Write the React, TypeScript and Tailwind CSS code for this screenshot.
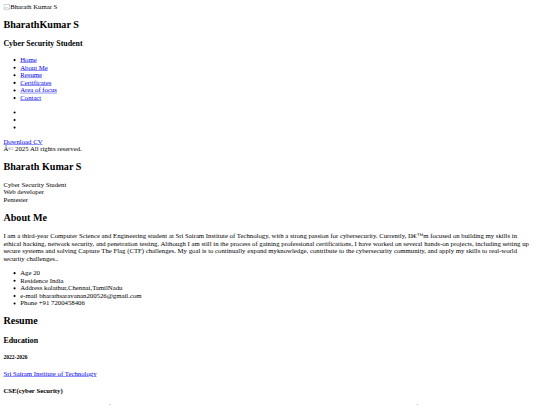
import { ReactNode } from 'react'

function A({ children }: { children: ReactNode }) {
  return <a href="#" className="text-[#0000ee] underline">{children}</a>
}

function H2({ children }: { children: ReactNode }) {
  return <h2 className="text-[24px] font-bold my-[19.92px]">{children}</h2>
}

function H3({ children }: { children: ReactNode }) {
  return <h3 className="text-[18.72px] font-bold my-[18.72px]">{children}</h3>
}

function Ul({ children }: { children: ReactNode }) {
  return <ul className="list-disc pl-10 my-4">{children}</ul>
}

export default function App() {
  const nav = ['Home', 'About Me', 'Resume', 'Certificates', 'Area of focus', 'Contact']
  const info = [
    'Age 20',
    'Residence India',
    'Address kolathur,Chennai,TamilNadu',
    'e-mail bharathsaravanan200526@gmail.com',
    'Phone +91 7200458406',
  ]

  return (
    <div className="w-[540px] h-[405px] overflow-hidden bg-white">
      <div className="w-[1280px] origin-top-left scale-[0.421875] p-2 text-[16px] leading-[normal] text-black [font-family:'Liberation_Serif','Times_New_Roman',serif]">
        <div className="h-[17px] leading-[17px]">
          <span className="inline-flex items-center">
            <svg width="16" height="16" viewBox="0 0 16 16" className="inline">
              <rect x="1.5" y="1.5" width="13" height="13" fill="none" stroke="#999" />
              <path d="M3 12l3-4 2 3 2-2 3 3" fill="none" stroke="#6a6" />
            </svg>
            Bharath Kumar S
          </span>
        </div>
        <H2>BharathKumar S</H2>
        <H3>Cyber Security Student</H3>
        <Ul>
          {nav.map((n) => (
            <li key={n}>
              <A>{n}</A>
            </li>
          ))}
        </Ul>
        <Ul>
          <li>&nbsp;</li>
          <li>&nbsp;</li>
          <li>&nbsp;</li>
        </Ul>
        <div>
          <A>Download CV</A>
          <br />
          Â© 2025 All rights reserved.
        </div>

        <H2>Bharath Kumar S</H2>
        <div>
          Cyber Security Student
          <br />
          Web developer
          <br />
          Pentester
        </div>

        <H2>About Me</H2>
        <p className="my-4">
          I am a third-year Computer Science and Engineering student at Sri Sairam Institute of Technology, with a
          strong passion for cybersecurity. Currently, Iâ€™m focused on building my skills in ethical hacking, network
          security, and penetration testing. Although I am still in the process of gaining professional certifications,
          I have worked on several hands-on projects, including setting up secure systems and solving Capture The Flag
          (CTF) challenges. My goal is to continually expand myknowledge, contribute to the cybersecurity community, and
          apply my skills to real-world security challenges..
        </p>
        <Ul>
          {info.map((i) => (
            <li key={i}>{i}</li>
          ))}
        </Ul>

        <H2>Resume</H2>
        <H3>Education</H3>
        <h5 className="text-[13.28px] font-bold my-[22.18px]">2022-2026</h5>
        <p className="my-4">
          <A>Sri Sairam Institute of Technology</A>
        </p>
        <h4 className="text-[16px] font-bold my-[21.28px]">CSE(cyber Security)</h4>
        <p className="my-4">
          I am currently pursuing my Bachelor of Engineering in Computer Science with a specialization in Cyber Security,
          where I am learning about network defense, cryptography, ethical hacking and secure software development.
        </p>
      </div>
    </div>
  )
}
